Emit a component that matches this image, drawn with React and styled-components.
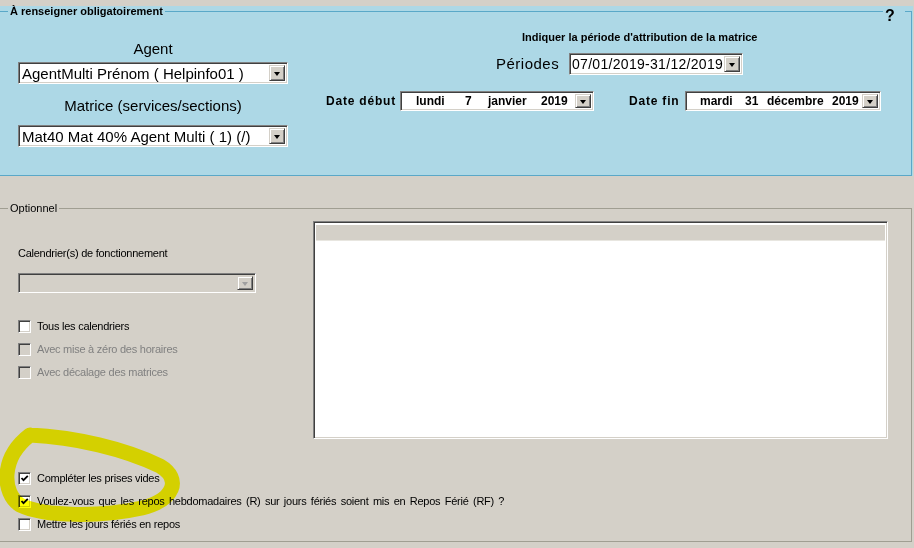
import React from 'react';
import styled, { createGlobalStyle } from 'styled-components';

const GlobalStyle = createGlobalStyle`
	body {
		margin: 0;
		font-family: "Liberation Sans", Arial, sans-serif;
	}
`;

const Page = styled.div`
	position: relative;
	width: 914px;
	height: 548px;
	padding-top: 6px;
	box-sizing: border-box;
	background: #d4d0c8;
	overflow: hidden;
	color: #000;
`;

/* ---------- required block ---------- */

const Required = styled.div`
	position: relative;
	width: 913px;
	height: 170px;
	background: #add8e6;
`;

const RequiredSet = styled.fieldset`
	margin: 0;
	padding: 0;
	width: 912px;
	height: 100%;
	box-sizing: border-box;
	border: 1px solid #5aa8c8;
	border-left: none;
`;

const BoldLegend = styled.legend`
	margin-left: 8px;
	padding: 0 2px;
	font: bold 11px/10px "Liberation Sans", Arial, sans-serif;
`;

const Help = styled.div`
	position: absolute;
	top: 2px;
	right: 8px;
	width: 20px;
	padding-left: 2px;
	background: #add8e6;
	font: bold 16px/16px "Liberation Sans", Arial, sans-serif;
`;

const Row = styled.div`
	display: flex;
`;

const LeftCol = styled.div`
	margin-left: 18px;
	width: 270px;
	display: flex;
	flex-direction: column;
	align-items: center;
`;

const FieldLabel = styled.div`
	margin-top: ${p => p.$mt}px;
	font: 15px/16px "Liberation Sans", Arial, sans-serif;
`;

const RightCol = styled.div`
	display: flex;
	flex-direction: column;
`;

const Title = styled.div`
	margin: 15px 0 0 234px;
	font: bold 11px/13px "Liberation Sans", Arial, sans-serif;
	white-space: nowrap;
`;

const PeriodRow = styled.div`
	display: flex;
	align-items: center;
	margin: 9px 0 0 208px;
`;

const PeriodLabel = styled.div`
	width: 73px;
	font: 15px/18px "Liberation Sans", Arial, sans-serif;
	letter-spacing: 0.5px;
`;

const DateRow = styled.div`
	display: flex;
	align-items: center;
	margin: 16px 0 0 38px;
`;

const DateLabel = styled.div`
	width: ${p => p.$w}px;
	margin-left: ${p => p.$ml || 0}px;
	font: bold 12px/14px "Liberation Sans", Arial, sans-serif;
	letter-spacing: 0.8px;
	white-space: nowrap;
`;

/* ---------- win classic controls ---------- */

const Combo = styled.div`
	display: flex;
	align-items: center;
	width: ${p => p.$w}px;
	height: ${p => p.$h || 22}px;
	margin-top: ${p => p.$mt || 0}px;
	box-sizing: border-box;
	border: 1px solid;
	border-color: #808080 #ffffff #ffffff #808080;
	box-shadow: inset 1px 1px #404040, inset -1px -1px #d4d0c8;
	background: ${p => (p.$disabled ? '#d4d0c8' : '#ffffff')};
	padding: 2px 2px 2px ${p => p.$pl || 3}px;
`;

const ComboText = styled.div`
	flex: 1;
	font-family: "Liberation Sans", Arial, sans-serif;
	font-size: ${p => p.$size || 15}px;
	line-height: 17px;
	letter-spacing: ${p => p.$ls || 0}px;
	white-space: nowrap;
	overflow: hidden;
`;

const DropButton = styled.div`
	width: 16px;
	align-self: stretch;
	box-sizing: border-box;
	display: flex;
	align-items: center;
	justify-content: center;
	background: #d4d0c8;
	border: 1px solid;
	border-color: #d4d0c8 #404040 #404040 #d4d0c8;
	box-shadow: inset 1px 1px #ffffff, inset -1px -1px #808080;

	&::after {
		content: '';
		border-left: 3.5px solid transparent;
		border-right: 3.5px solid transparent;
		border-top: 4px solid ${p => (p.$disabled ? '#a0a0a0' : '#000')};
		margin-top: 1px;
	}
`;

const DateParts = styled.div`
	flex: 1;
	display: flex;
	font: bold 12px/14px "Liberation Sans", Arial, sans-serif;
	white-space: nowrap;
`;

const Part = styled.span`
	width: ${p => p.$w}px;
`;

/* ---------- optional block ---------- */

const OptionSet = styled.fieldset`
	margin: 26px 0 0;
	padding: 0;
	width: 912px;
	height: 340px;
	box-sizing: border-box;
	border: 1px solid #a09e92;
	border-left: none;
`;

const Legend = styled.legend`
	margin-left: 8px;
	padding: 0 2px;
	font: 11px/12px "Liberation Sans", Arial, sans-serif;
`;

const OptionTop = styled.div`
	display: flex;
`;

const OptionLeft = styled.div`
	width: 295px;
	padding-left: 18px;
	display: flex;
	flex-direction: column;
	align-items: flex-start;
`;

const SmallLabel = styled.div`
	margin-top: 33px;
	font: 11px/13px "Liberation Sans", Arial, sans-serif;
	letter-spacing: -0.25px;
`;

const CheckList = styled.div`
	display: flex;
	flex-direction: column;
	gap: 10px;
	margin-top: ${p => p.$mt}px;
	padding-left: ${p => p.$pl || 0}px;
`;

const CheckRow = styled.label`
	display: flex;
	align-items: center;
	gap: 6px;
	height: 13px;
	font: 11px/13px "Liberation Sans", Arial, sans-serif;
	letter-spacing: -0.25px;
	word-spacing: ${p => p.$ws || 0}px;
	color: ${p => (p.$disabled ? '#808080' : '#000')};
	white-space: nowrap;
`;

const Box = styled.span`
	width: 13px;
	height: 13px;
	box-sizing: border-box;
	display: flex;
	align-items: center;
	justify-content: center;
	border: 1px solid;
	border-color: #808080 #ffffff #ffffff #808080;
	box-shadow: inset 1px 1px #404040, inset -1px -1px #d4d0c8;
	background: ${p => (p.$disabled ? '#d4d0c8' : '#ffffff')};
	flex: none;
`;

const ListBox = styled.div`
	width: 575px;
	height: 218px;
	margin-top: 7px;
	box-sizing: border-box;
	border: 1px solid;
	border-color: #808080 #ffffff #ffffff #808080;
	box-shadow: inset 1px 1px #404040, inset -1px -1px #d4d0c8;
	background: #ffffff;
	padding: 2px;
`;

const ListHeader = styled.div`
	height: 17px;
	box-sizing: border-box;
	background: #d4d0c8;
	border-top: 1px solid #ffffff;
	border-bottom: 1px solid #e8e6e0;
`;

const Marker = styled.svg`
	position: absolute;
	left: 0;
	top: 0;
	width: 914px;
	height: 548px;
	pointer-events: none;
	mix-blend-mode: multiply;
`;

const Check = ({ checked, disabled, children, ws }) => (
	<CheckRow $disabled={disabled} $ws={ws}>
		<Box $disabled={disabled}>
			{checked && (
				<svg width="9" height="9" viewBox="0 0 9 9">
					<path d="M1.5 4 L3.5 6.2 L7.8 1.8" fill="none" stroke="#000" strokeWidth="1.8" />
				</svg>
			)}
		</Box>
		{children}
	</CheckRow>
);

export default function App() {
	return (
		<Page>
			<GlobalStyle />

			<Required>
				<RequiredSet>
					<BoldLegend>À renseigner obligatoirement</BoldLegend>
					<Row>
						<LeftCol>
							<FieldLabel $mt={25}>Agent</FieldLabel>
							<Combo $w={270} $mt={5}>
								<ComboText>AgentMulti Prénom ( Helpinfo01 )</ComboText>
								<DropButton />
							</Combo>
							<FieldLabel $mt={14}>Matrice (services/sections)</FieldLabel>
							<Combo $w={270} $mt={11}>
								<ComboText>Mat40 Mat 40% Agent Multi ( 1) (/)</ComboText>
								<DropButton />
							</Combo>
						</LeftCol>

						<RightCol>
							<Title>Indiquer la période d'attribution de la matrice</Title>
							<PeriodRow>
								<PeriodLabel>Périodes</PeriodLabel>
								<Combo $w={174} $pl={2}>
									<ComboText $size={14} $ls={0.3}>07/01/2019-31/12/2019</ComboText>
									<DropButton />
								</Combo>
							</PeriodRow>
							<DateRow>
								<DateLabel $w={74}>Date début</DateLabel>
								<Combo $w={194} $h={20} $pl={15}>
									<DateParts>
										<Part $w={49}>lundi</Part>
										<Part $w={23}>7</Part>
										<Part $w={53}>janvier</Part>
										<Part>2019</Part>
									</DateParts>
									<DropButton />
								</Combo>
								<DateLabel $w={56} $ml={35}>Date fin</DateLabel>
								<Combo $w={196} $h={20} $pl={14}>
									<DateParts>
										<Part $w={45}>mardi</Part>
										<Part $w={22}>31</Part>
										<Part $w={65}>décembre</Part>
										<Part>2019</Part>
									</DateParts>
									<DropButton />
								</Combo>
							</DateRow>
						</RightCol>
					</Row>
				</RequiredSet>
				<Help>?</Help>
			</Required>

			<OptionSet>
				<Legend>Optionnel</Legend>
				<OptionTop>
					<OptionLeft>
						<SmallLabel>Calendrier(s) de fonctionnement</SmallLabel>
						<Combo $w={238} $h={20} $mt={13} $disabled>
							<ComboText />
							<DropButton $disabled />
						</Combo>
						<CheckList $mt={27}>
							<Check>Tous les calendriers</Check>
							<Check disabled>Avec mise à zéro des horaires</Check>
							<Check disabled>Avec décalage des matrices</Check>
						</CheckList>
					</OptionLeft>
					<ListBox>
						<ListHeader />
					</ListBox>
				</OptionTop>

				<CheckList $mt={33} $pl={18}>
					<Check checked>Compléter les prises vides</Check>
					<Check checked ws={1.6}>
						Voulez-vous que les repos hebdomadaires (R) sur jours fériés soient mis en Repos Férié (RF) ?
					</Check>
					<Check>Mettre les jours fériés en repos</Check>
				</CheckList>
			</OptionSet>

			<Marker viewBox="0 0 914 548">
				<path
					d="M30 435 C 75 437, 125 449, 160 466 C 182 479, 174 500, 142 508 C 102 517, 45 517, 20 505 C 2 493, 0 458, 30 435"
					fill="none"
					stroke="#ffff00"
					strokeWidth="15"
					strokeLinecap="round"
				/>
			</Marker>
		</Page>
	);
}
